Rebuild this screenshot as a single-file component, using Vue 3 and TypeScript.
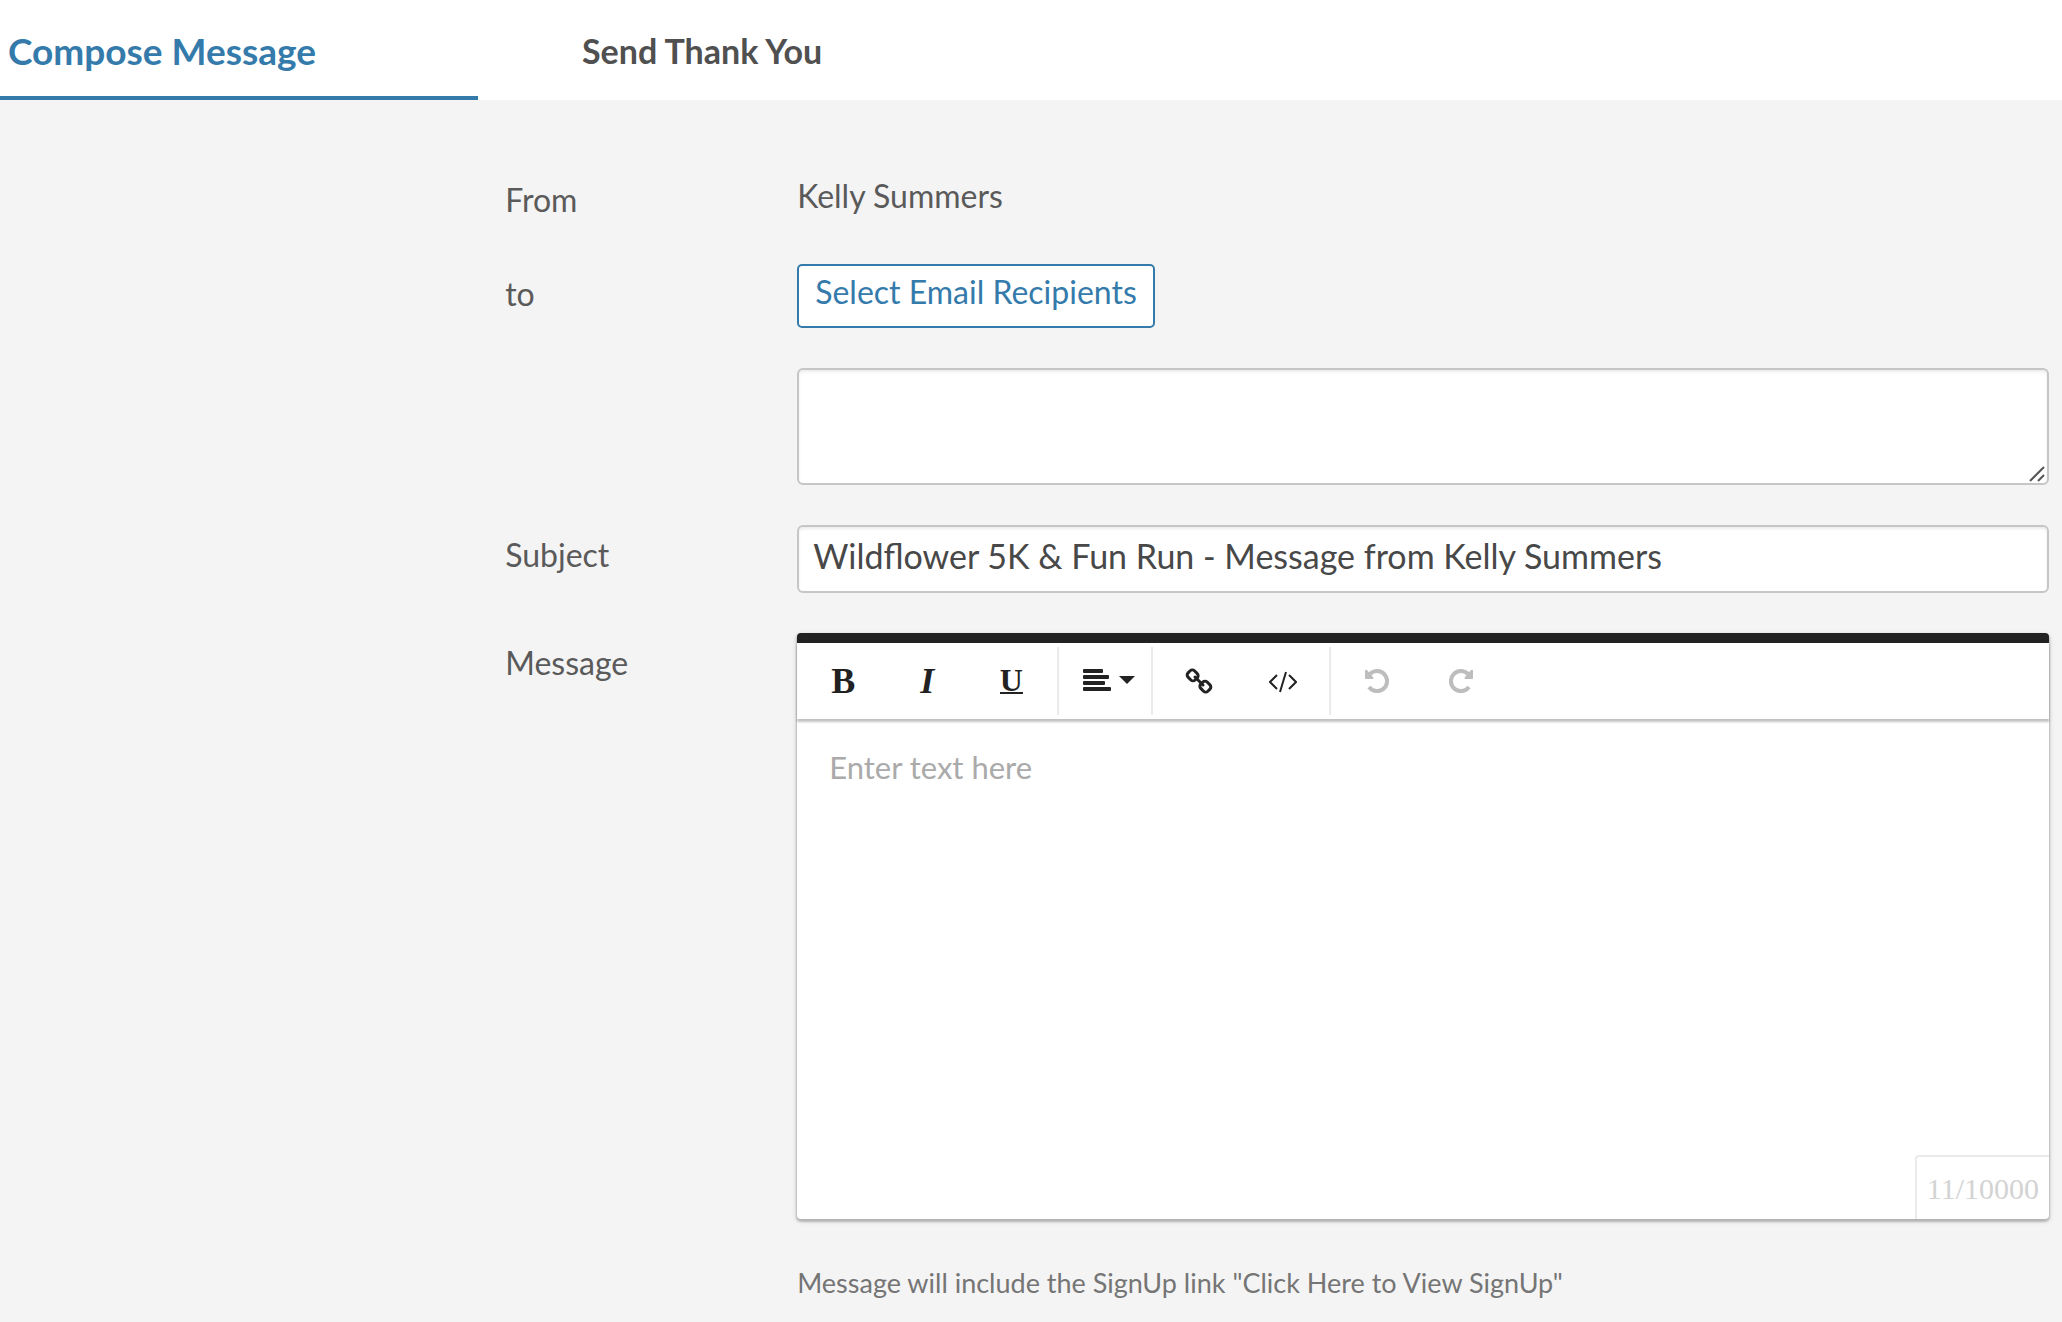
<script setup lang="ts">
import { ref } from 'vue'

const recipients = ref('')
const subject = ref('Wildflower 5K & Fun Run - Message from Kelly Summers')
const message = ref('')
</script>

<template>
  <div class="page">
    <nav class="tabs">
      <a class="tab active" href="#compose">Compose Message</a>
      <a class="tab" href="#thanks">Send Thank You</a>
    </nav>

    <form class="form" @submit.prevent>
      <div class="row">
        <span class="label">From</span>
        <span class="field from">Kelly Summers</span>
      </div>

      <div class="row">
        <label class="label" for="recipients">to</label>
        <div class="field stack">
          <button type="button" class="select">Select Email Recipients</button>
          <div class="area">
            <textarea id="recipients" v-model="recipients"></textarea>
            <svg class="grip" width="16" height="16" viewBox="0 0 16 16" fill="none" stroke="#555" stroke-width="2">
              <path d="M1 15 15 1M9 15l6-6" />
            </svg>
          </div>
        </div>
      </div>

      <div class="row">
        <label class="label" for="subject">Subject</label>
        <input id="subject" v-model="subject" class="field subject" type="text" />
      </div>

      <div class="row">
        <label class="label" for="message">Message</label>
        <div class="field">
          <div class="editor">
            <div class="toolbar">
              <button type="button" class="tool bold" aria-label="Bold">B</button>
              <button type="button" class="tool italic" aria-label="Italic">I</button>
              <button type="button" class="tool underline" aria-label="Underline"><span>U</span></button>
              <i class="sep"></i>
              <button type="button" class="tool align" aria-label="Align">
                <svg width="28" height="22" viewBox="0 0 28 22" fill="#222">
                  <rect width="20" height="4" rx="1" />
                  <rect y="6" width="26" height="4" rx="1" />
                  <rect y="12" width="22" height="4" rx="1" />
                  <rect y="18" width="28" height="4" rx="1" />
                </svg>
                <svg width="16" height="8" viewBox="0 0 16 8" fill="#222"><path d="M0 0h16L8 8z" /></svg>
              </button>
              <i class="sep"></i>
              <button type="button" class="tool" aria-label="Insert link">
                <svg width="28" height="28" viewBox="0 0 28 28" fill="none" stroke="#222" stroke-width="3">
                  <rect x="-5" y="-4" width="10" height="9" rx="3" transform="translate(8 8) rotate(45)" />
                  <rect x="-5" y="-5" width="10" height="9" rx="3" transform="translate(20 20) rotate(45)" />
                  <path d="M10 10l8 8" stroke-linecap="round" />
                </svg>
              </button>
              <button type="button" class="tool" aria-label="Code view">
                <svg class="code" width="28" height="22" viewBox="0 0 28 22" fill="none" stroke="#222" stroke-width="2">
                  <path d="M8 4 1 11l7 7M20 4l7 7-7 7M17 1l-6 20" />
                </svg>
              </button>
              <i class="sep"></i>
              <button type="button" class="tool" aria-label="Undo" disabled>
                <svg width="24" height="24" viewBox="0 0 24 24">
                  <path d="M5 5A10 10 0 1 1 4 18" fill="none" stroke="#bdbdbd" stroke-width="4" />
                  <path d="M0 2v7q0 1 1 1h7q1-1 0-2L2 1q-2-1-2 1z" fill="#bdbdbd" />
                </svg>
              </button>
              <button type="button" class="tool" aria-label="Redo" disabled>
                <svg width="24" height="24" viewBox="0 0 24 24">
                  <g transform="matrix(-1 0 0 1 24 0)">
                    <path d="M5 5A10 10 0 1 1 4 18" fill="none" stroke="#bdbdbd" stroke-width="4" />
                    <path d="M0 2v7q0 1 1 1h7q1-1 0-2L2 1q-2-1-2 1z" fill="#bdbdbd" />
                  </g>
                </svg>
              </button>
            </div>
            <textarea id="message" v-model="message" class="message" placeholder="Enter text here"></textarea>
            <span class="counter">11/10000</span>
          </div>
          <p class="hint">Message will include the SignUp link "Click Here to View SignUp"</p>
        </div>
      </div>
    </form>
  </div>
</template>

<style>
body {
  margin: 0;
  background: #f4f4f4;
}
</style>

<style scoped>
.page,
.page * {
  box-sizing: border-box;
}
.page {
  font: 32px/40px Lato, sans-serif;
  color: #5a5a5a;
}
button,
input,
textarea {
  margin: 0;
  font: inherit;
  color: inherit;
}
.tabs {
  display: flex;
  gap: 96px;
  height: 100px;
  background: #fff;
}
.tab {
  flex: 0 0 478px;
  padding: 31px 8px 0;
  border-bottom: 4px solid transparent;
  font-size: 34px;
  font-weight: 700;
  color: #505050;
  text-decoration: none;
}
.tab.active {
  border-color: #347bab;
  font-size: 37px;
  color: #347bab;
}
.form {
  display: flex;
  flex-direction: column;
  gap: 40px;
  padding: 70px 13px 24px 24.5%;
}
.row {
  display: flex;
  align-items: flex-start;
}
.label {
  flex: 0 0 292px;
  padding-top: 10px;
}
.field {
  flex: 1;
  min-width: 0;
}
.from {
  padding: 6px 0 8px;
}
.stack {
  display: flex;
  flex-direction: column;
  align-items: flex-start;
  gap: 40px;
}
.select {
  height: 64px;
  padding: 0 16px 8px;
  border: 2px solid #347bab;
  border-radius: 5px;
  background: #fff;
  color: #347bab;
}
.area {
  position: relative;
  width: 100%;
  height: 117px;
}
.area textarea,
.subject {
  display: block;
  width: 100%;
  border: 2px solid #c6c6c6;
  border-radius: 6px;
  background: #fff;
  box-shadow: inset 0 2px 3px rgba(0, 0, 0, 0.08);
  outline: 0;
}
.area textarea {
  height: 100%;
  padding: 8px 14px;
  resize: none;
}
.grip {
  position: absolute;
  right: 4px;
  bottom: 3px;
}
.subject {
  height: 68px;
  padding: 0 14px 8px;
  font-size: 34px;
  color: #484848;
}
.editor {
  position: relative;
  border-top: 10px solid #222;
  border-radius: 4px;
  background: #fff;
  box-shadow: 0 2px 6px rgba(0, 0, 0, 0.12), 0 2px 2px 1px rgba(0, 0, 0, 0.2);
}
.toolbar {
  position: relative;
  display: flex;
  gap: 8px;
  height: 76px;
  padding-left: 8px;
  box-shadow: 0 3px 2px rgba(0, 0, 0, 0.24);
}
.tool {
  display: flex;
  align-items: center;
  justify-content: center;
  width: 76px;
  height: 76px;
  padding: 0;
  border: 0;
  background: none;
  color: #222;
  font-family: "Liberation Serif", serif;
  font-weight: 700;
}
.bold,
.italic {
  font-size: 36px;
}
.italic {
  font-style: italic;
}
.underline {
  font-size: 32px;
}
.underline span {
  line-height: 24px;
  border-bottom: 2px solid #222;
}
.align {
  gap: 8px;
  padding: 0 0 2px 8px;
}
.code {
  margin-top: 2px;
}
.sep {
  width: 2px;
  margin: 4px 0;
  background: #ebebeb;
}
.message {
  display: block;
  width: 100%;
  height: 500px;
  padding: 28px 32px;
  border: 0;
  border-radius: 4px;
  outline: 0;
  background: transparent;
  font-size: 31px;
  resize: none;
}
.message::placeholder {
  color: #aaa;
  opacity: 1;
}
.counter {
  position: absolute;
  right: 0;
  bottom: 0;
  padding: 12px 10px 10px;
  border: solid #ebebeb;
  border-width: 2px 0 0 2px;
  border-radius: 4px 0 0;
  font-family: "Liberation Serif", serif;
  font-size: 30px;
  color: #d3d3d3;
}
.hint {
  margin: 46px 0 0;
  font-size: 27px;
  line-height: 36px;
  color: #757575;
}
</style>
